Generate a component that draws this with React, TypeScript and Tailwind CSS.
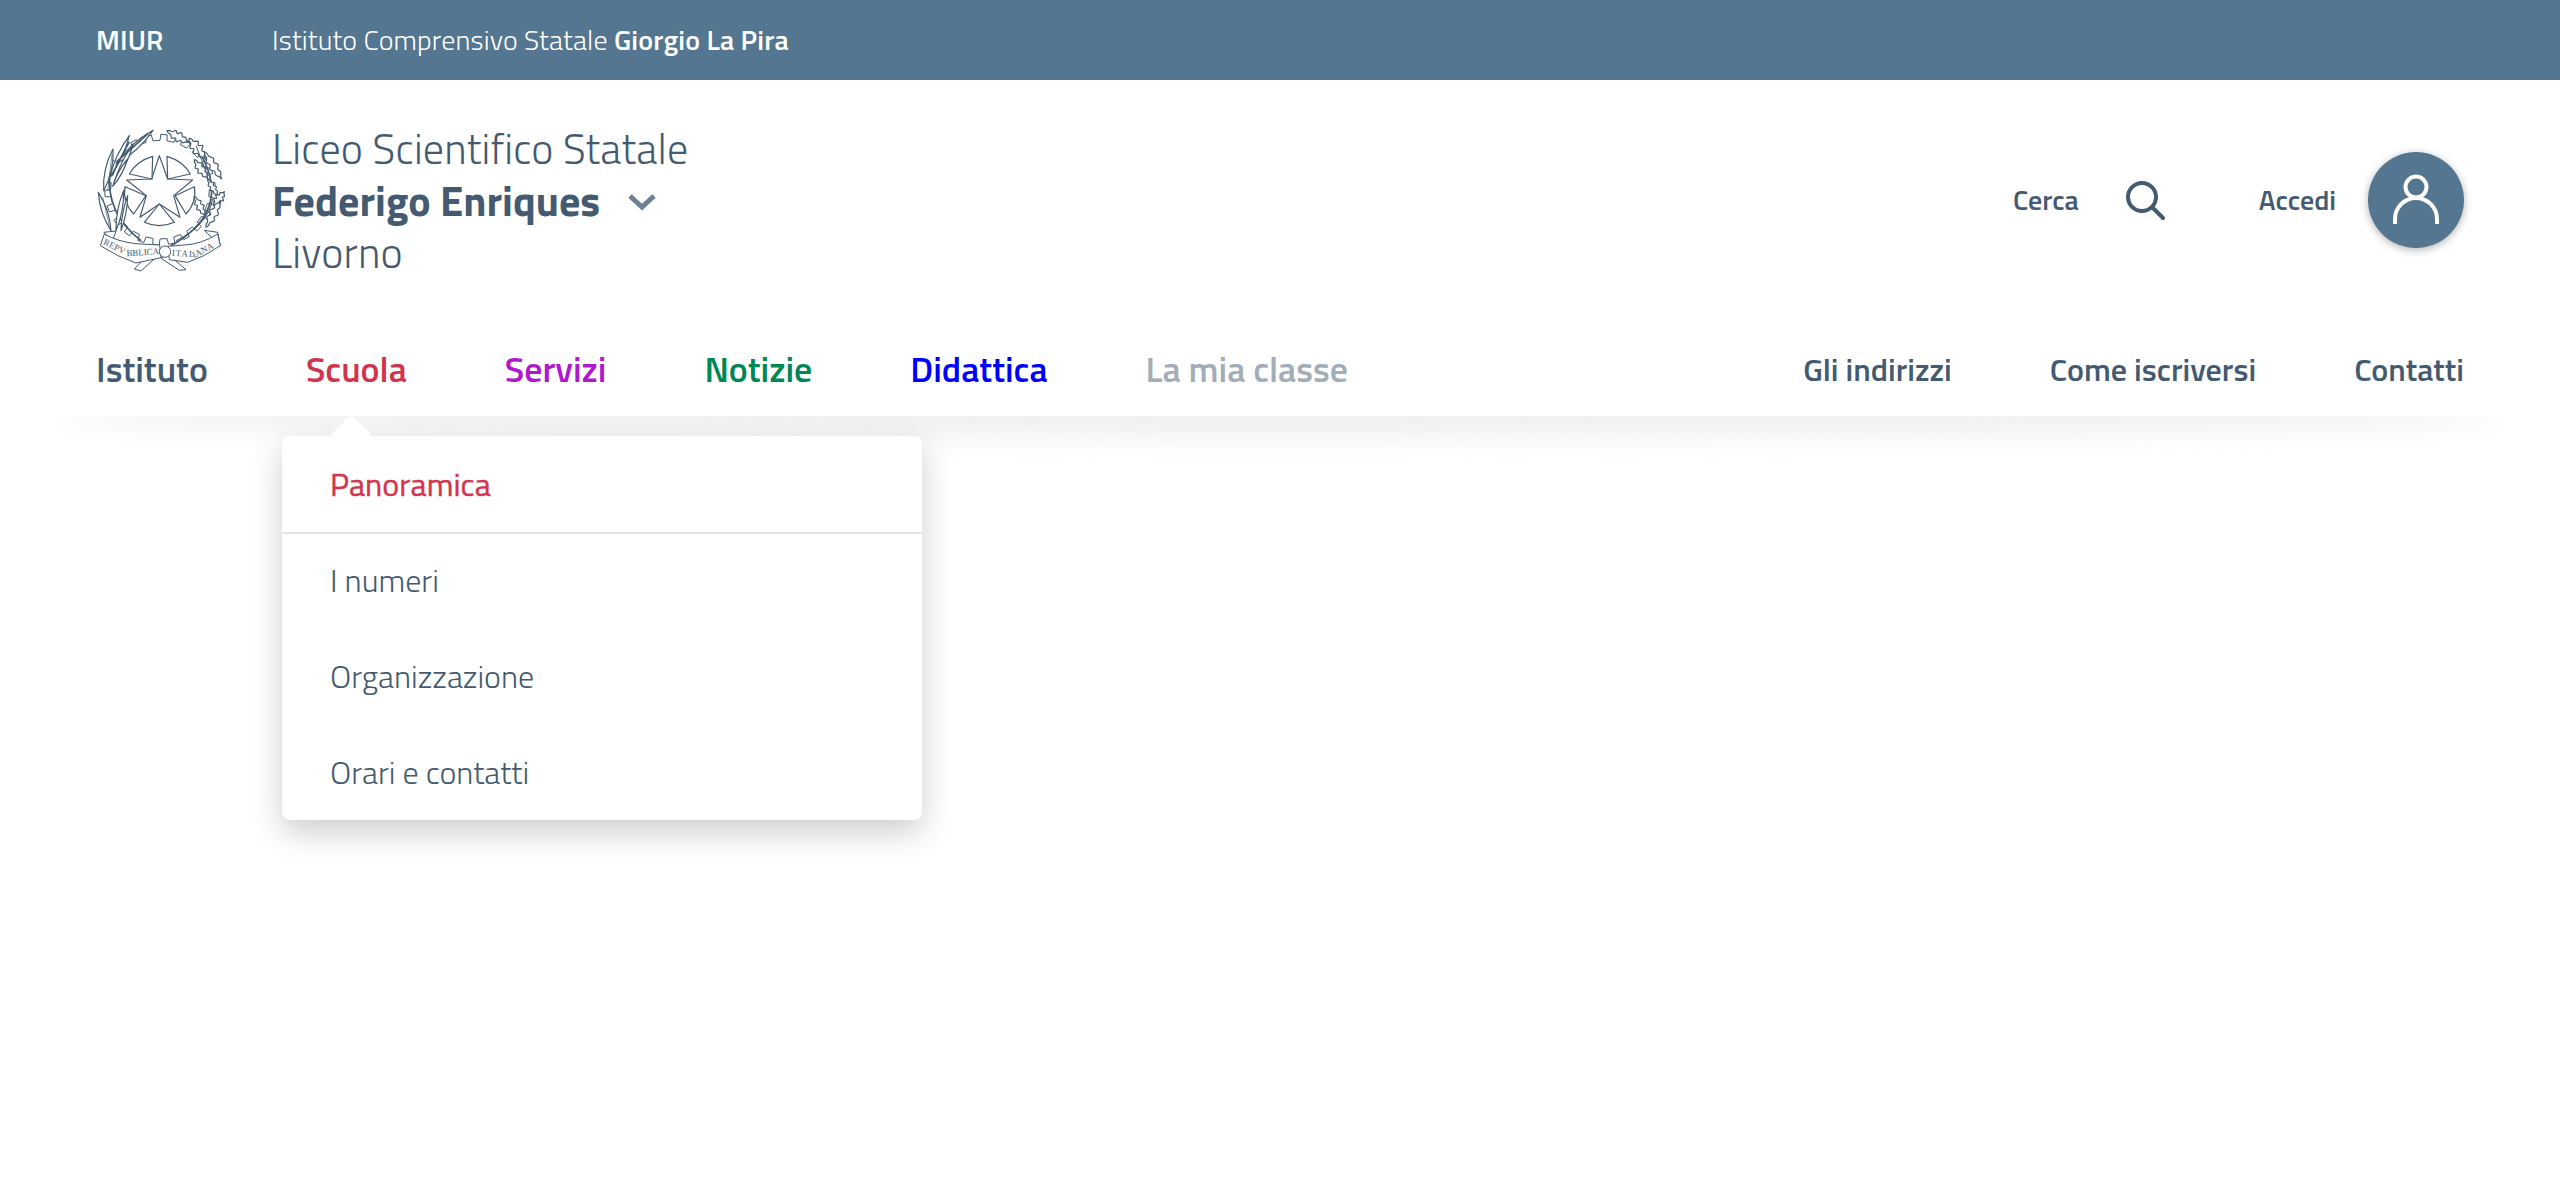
import React from "react";

const FONT = "font-['Titillium_Web','Lato','Noto_Sans',sans-serif]";

// leaf outline between two points, b = belly width
const leaf = (x1: number, y1: number, x2: number, y2: number, b: number): string => {
  const mx = (x1 + x2) / 2;
  const my = (y1 + y2) / 2;
  const dx = x2 - x1;
  const dy = y2 - y1;
  const l = Math.hypot(dx, dy);
  const nx = (-dy / l) * b;
  const ny = (dx / l) * b;
  return `M${x1} ${y1}Q${mx + nx} ${my + ny} ${x2} ${y2}Q${mx - nx} ${my - ny} ${x1} ${y1}Z`;
};

// same, with a wavy edge for the oak side
const oak = (x1: number, y1: number, x2: number, y2: number, b: number): string => {
  const dx = x2 - x1;
  const dy = y2 - y1;
  const l = Math.hypot(dx, dy);
  const nx = -dy / l;
  const ny = dx / l;
  const pts: string[] = [];
  const n = 24;
  for (let i = 0; i <= n; i++) {
    const t = i / n;
    const w = b * Math.sin(Math.PI * t) * (0.72 + 0.28 * Math.sin(t * Math.PI * 8));
    pts.push(`${(x1 + dx * t + nx * w).toFixed(1)} ${(y1 + dy * t + ny * w).toFixed(1)}`);
  }
  for (let i = n; i >= 0; i--) {
    const t = i / n;
    const w = b * Math.sin(Math.PI * t) * (0.72 + 0.28 * Math.sin(t * Math.PI * 8));
    pts.push(`${(x1 + dx * t - nx * w).toFixed(1)} ${(y1 + dy * t - ny * w).toFixed(1)}`);
  }
  return `M${pts.join("L")}Z`;
};

const gearPath = (): string => {
  const cx = 297;
  const cy = 272;
  const teeth = 22;
  let d = "";
  for (let i = 0; i < teeth; i++) {
    const s = (i / teeth) * Math.PI * 2;
    const w = (Math.PI * 2) / teeth;
    const a = [
      [148, s],
      [148, s + w * 0.5],
      [166, s + w * 0.55],
      [166, s + w * 0.95],
    ];
    a.forEach(([r, t], j) => {
      const x = (cx + r * Math.cos(t)).toFixed(1);
      const y = (cy + r * Math.sin(t)).toFixed(1);
      d += `${i === 0 && j === 0 ? "M" : "L"}${x} ${y}`;
    });
  }
  return d + "Z";
};

const Emblem = (): React.JSX.Element => (
  <svg
    viewBox="105 84 390 438"
    className="w-[130px] h-[146px] shrink-0"
    fill="none"
    stroke="#435a70"
    strokeWidth="3.5"
    strokeLinejoin="round"
  >
    <path d={gearPath()} strokeWidth="3" />
    {/* star and the five pieces round it */}
    <path d="M295 170L320 240L395 243L338 290L357 355L295 315L237 355L256 290L197 243L272 240Z" fill="#fff" />
    <path d="M318 172Q366 186 388 225L320 240Z" fill="#fff" />
    <path d="M275 172Q227 186 205 225L273 240Z" fill="#fff" />
    <path d="M400 263Q408 310 375 345L342 290Z" fill="#fff" />
    <path d="M192 263Q184 310 218 345L255 290Z" fill="#fff" />
    <path d="M295 315L340 370Q295 390 250 370Z" fill="#fff" />
    {/* olive branch */}
    <path d="M240 425Q130 340 148 215" strokeWidth="5" />
    <g fill="#fff">
      <path d={leaf(150, 395, 112, 280, 16)} />
      <path d={leaf(128, 275, 156, 150, 18)} />
      <path d={leaf(146, 235, 205, 110, 14)} />
      <path d={leaf(165, 195, 276, 94, 18)} />
      <path d={leaf(160, 250, 217, 135, 12)} />
      <path d={leaf(155, 262, 200, 180, 10)} />
      <path d={leaf(165, 395, 188, 275, 13)} />
      <path d={leaf(180, 395, 200, 290, 9)} />
    </g>
    <path d="M150 232L205 128M165 190L262 103" strokeWidth="5" />
    <path d="M140 275L153 165M125 295L145 380" strokeWidth="2" />
    {/* oak branch */}
    <path d="M330 440Q490 350 440 210Q420 150 370 120" strokeWidth="5" />
    <g fill="#fff">
      <path d={oak(318, 95, 382, 130, 16)} />
      <path d={oak(384, 118, 432, 178, 19)} />
      <path d={oak(400, 182, 440, 238, 15)} />
      <path d={oak(430, 158, 482, 240, 15)} />
      <path d={oak(440, 240, 470, 290, 11)} />
      <path d={oak(458, 320, 490, 278, 15)} />
      <path d={oak(400, 292, 432, 350, 13)} />
      <path d={oak(435, 385, 478, 305, 15)} />
    </g>
    <path d="M345 425Q440 380 455 300M440 230L405 140" strokeWidth="3" />
    {/* ribbon */}
    <g fill="#fff" strokeWidth="3">
      <path d="M128 400L165 396L155 425L128 400Z" />
      <path d="M430 394L470 400L478 440L430 394Z" />
      <path d="M220 510L265 465L285 475L240 516Z" />
      <path d="M375 512L320 465L300 478L355 514Z" />
      <path d="M118 440L130 405Q170 428 225 434L296 438L300 476L225 492Q170 474 118 440Z" />
      <path d="M478 440L470 405Q420 436 370 438L320 442L325 482L380 490Q430 474 478 440Z" />
      <circle cx="312" cy="458" r="17" />
    </g>
    <g fill="#435a70" stroke="none" fontFamily="'Liberation Serif', serif" fontSize="27">
      <text transform="translate(125 435) rotate(26)" textLength="70">REPV</text>
      <text transform="translate(197 472) rotate(-4)" textLength="98">BBLICA</text>
      <text transform="translate(332 470) rotate(4)" textLength="68">ITAL</text>
      <text transform="translate(400 478) rotate(-28)" textLength="68">IANA</text>
    </g>
  </svg>
);

const leftNav: { label: string; color: string }[] = [
  { label: "Istituto", color: "text-[#435a70]" },
  { label: "Scuola", color: "text-[#d1344c]" },
  { label: "Servizi", color: "text-[#b018cf]" },
  { label: "Notizie", color: "text-[#008758]" },
  { label: "Didattica", color: "text-[#0000ff]" },
  { label: "La mia classe", color: "text-[#a2adb8]" },
];

const rightNav = ["Gli indirizzi", "Come iscriversi", "Contatti"];

const App = (): React.JSX.Element => {
  return (
    <div className={`${FONT} relative h-[1200px] bg-white text-[#435a70]`}>
      {/* Top bar */}
      <div className="flex items-center h-20 px-24 bg-[#547690] text-white text-[28px] tracking-[0.15px]">
        <span className="w-[176px] font-semibold">MIUR</span>
        <span className="font-light">
          Istituto Comprensivo Statale <b className="font-semibold">Giorgio La Pira</b>
        </span>
      </div>

      {/* Header */}
      <div className="flex items-center justify-between h-[240px] px-24">
        <div className="flex items-center">
          <div className="w-[176px]">
            <Emblem />
          </div>
          <div className="text-[42px] leading-[52px] font-light tracking-[0.2px]">
            <div>Liceo Scientifico Statale</div>
            <div className="flex items-center gap-7 font-bold tracking-normal">
              Federigo Enriques
              <svg viewBox="0 0 28 18" className="w-7 h-[18px] mt-1" fill="none" stroke="#6b8092" strokeWidth="5">
                <path d="M2 3l12 11L26 3" />
              </svg>
            </div>
            <div>Livorno</div>
          </div>
        </div>
        <div className="flex items-center text-[28px] font-semibold">
          <span>Cerca</span>
          <svg viewBox="0 0 40 40" className="w-10 h-10 ml-[46px] mr-[94px]" fill="none" stroke="#435a70" strokeWidth="4" strokeLinecap="round">
            <circle cx="17" cy="17" r="14" />
            <path d="M27.5 27.5L38 38" />
          </svg>
          <span>Accedi</span>
          <div className="flex items-center justify-center w-24 h-24 ml-8 rounded-full bg-[#547690] shadow-[0_2px_8px_rgba(0,0,0,0.3)]">
            <svg viewBox="0 0 48 52" className="w-12 h-[52px]" fill="none" stroke="#fff" strokeWidth="4">
              <circle cx="24" cy="13" r="10.5" />
              <path d="M3 50V45a21 21 0 0 1 42 0v5" />
            </svg>
          </div>
        </div>
      </div>

      {/* Nav */}
      <div className="flex items-center justify-between h-24 pt-[2px] px-24 text-[35.8px] font-semibold">
        <div className="flex items-center gap-[98px]">
          {leftNav.map((item) => (
            <a key={item.label} className={item.color}>
              {item.label}
            </a>
          ))}
        </div>
        <div className="flex items-center gap-[98px] text-[32px]">
          {rightNav.map((item) => (
            <a key={item}>{item}</a>
          ))}
        </div>
      </div>

      {/* Soft shadow under the nav, cut off at its top edge */}
      <div className="h-12 overflow-hidden">
        <div className="h-11 -mt-[22px] mx-[60px] rounded-[50%] bg-[#f0f0f0] blur-[12px]" />
      </div>

      {/* Dropdown */}
      <div className="absolute left-[282px] top-[436px] w-[640px] rounded-lg bg-white text-[32px] shadow-[0_12px_32px_rgba(0,0,0,0.2)]">
        <div className="absolute left-[53px] -top-[15px] w-8 h-8 rotate-45 rounded-md bg-white" />
        <div className="relative flex items-center h-[98px] px-12 text-[#d1344c] tracking-[0.1px] [-webkit-text-stroke:0.4px_#d1344c] border-b-2 border-[#e3e4e6]">
          Panoramica
        </div>
        <div className="relative h-[288px] -mt-[2px] font-light">
          <div className="flex items-center h-24 px-12">I numeri</div>
          <div className="flex items-center h-24 px-12">Organizzazione</div>
          <div className="flex items-center h-24 px-12">Orari e contatti</div>
        </div>
      </div>
    </div>
  );
};

export default App;
